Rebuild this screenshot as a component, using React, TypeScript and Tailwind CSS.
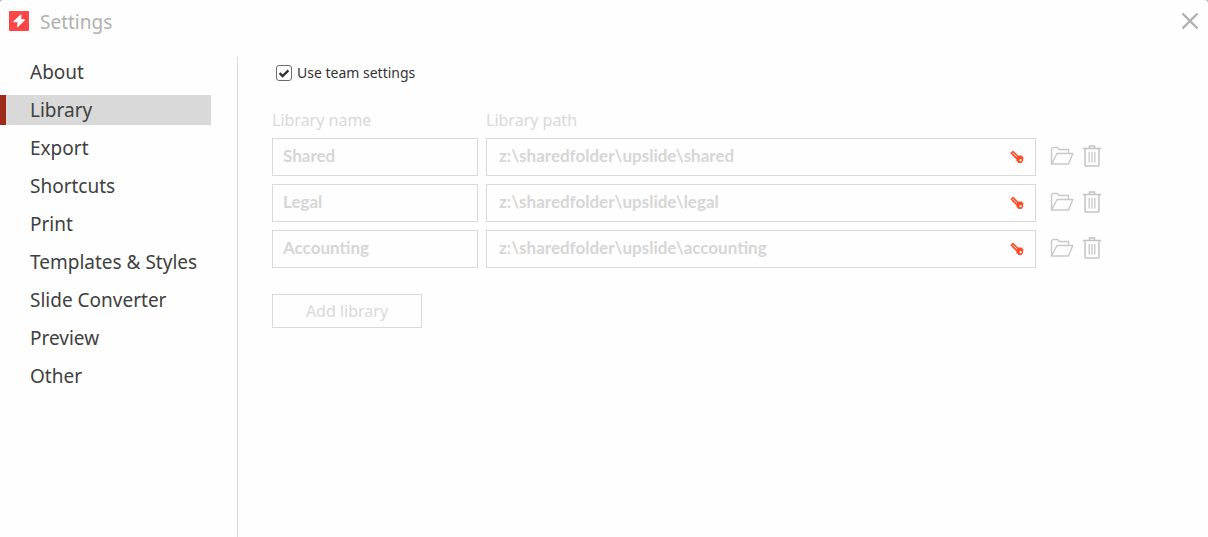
import { useState } from 'react';
import clsx from 'clsx';

const sections = [
  'About',
  'Library',
  'Export',
  'Shortcuts',
  'Print',
  'Templates & Styles',
  'Slide Converter',
  'Preview',
  'Other',
];

const libraries = [
  { name: 'Shared', path: 'z:\\sharedfolder\\upslide\\shared' },
  { name: 'Legal', path: 'z:\\sharedfolder\\upslide\\legal' },
  { name: 'Accounting', path: 'z:\\sharedfolder\\upslide\\accounting' },
];

function LogoIcon() {
  return (
    <svg width="20" height="20" viewBox="0 0 20 20" aria-hidden="true">
      <rect width="20" height="20" rx="1" fill="#ff4646" />
      <path d="M11.6 3.6 4.2 10.4l.3.9h4l-.6 4.6.8.3 7.2-7-.3-.9h-3.4l.3-4.4z" fill="#fff" />
    </svg>
  );
}

function CloseIcon() {
  return (
    <svg width="18" height="18" viewBox="0 0 18 18" aria-hidden="true">
      <path d="M1.5 1.5l15 15M16.5 1.5l-15 15" stroke="#b0b0b0" strokeWidth="2.4" fill="none" />
    </svg>
  );
}

function KeyIcon() {
  return (
    <svg width="14" height="14" viewBox="0 0 14 14" aria-hidden="true">
      <path d="M1.2 3 6.6 8.4M3 1.6l5.2 5.2" stroke="#ff4a25" strokeWidth="1.5" strokeLinecap="round" fill="none" />
      <path d="M1.4 2.8 3 1.6M2.6 4.4l1.2 1.8M4.6 6l1.2 2" stroke="#ff4a25" strokeWidth="1.2" fill="none" />
      <path d="M8.2 5.4h3.4l1.6 1.8v3.6L11.4 13H8.6L6.4 10.8V8z" fill="#ff4a25" />
      <circle cx="10.6" cy="10.2" r="1.1" fill="#fff" />
    </svg>
  );
}

function FolderIcon() {
  return (
    <svg width="24" height="20" viewBox="0 0 24 20" aria-hidden="true">
      <path
        d="M1.5 18V2.5L3 1.5h4.5l1.5 2h9.5v4M1.5 18 7 7.5h15.8L18.5 18z"
        fill="none"
        stroke="#c9c9c9"
        strokeWidth="1.4"
        strokeLinejoin="round"
      />
    </svg>
  );
}

function TrashIcon() {
  return (
    <svg width="18" height="22" viewBox="0 0 18 22" fill="none" stroke="#c4c4c4" aria-hidden="true">
      <path d="M0 3.5h18M6.5 3.5V1h5v2.5" strokeWidth="1.5" />
      <path d="M2 3.5v15.7q0 1.8 1.8 1.8h10.4q1.8 0 1.8-1.8V3.5" strokeWidth="1.5" />
      <path d="M6.2 7v10.5M9 7v10.5M11.8 7v10.5" strokeWidth="1.2" />
    </svg>
  );
}

const fieldClass =
  "h-[38px] w-full border border-[#d9d9d9] bg-transparent pb-1 font-['Lato',sans-serif] text-[17px] font-bold text-[#d6d6d6]";

export default function App() {
  const [active, setActive] = useState('Library');
  const [teamSettings, setTeamSettings] = useState(true);

  return (
    <div className="min-h-screen bg-[#c4c4c4] font-['Noto_Sans','Open_Sans',sans-serif]">
      <div className="flex min-h-screen flex-col rounded-t bg-[#fefefe]">
        <header className="flex h-[57px] items-start justify-between pt-[5px] pr-[9px] pl-[9px]">
          <div className="flex h-8 items-center gap-[11px]">
            <LogoIcon />
            <h1 className="pt-0.5 text-[19px] text-[#b0b0b0]">Settings</h1>
          </div>
          <button type="button" aria-label="Close" className="flex h-8 items-center">
            <CloseIcon />
          </button>
        </header>

        <div className="flex flex-1">
          <nav className="w-[238px] shrink-0 border-r border-[#d9d9d9] pr-[26px]">
            <ul className="flex flex-col gap-2">
              {sections.map((section) => (
                <li key={section}>
                  <button
                    type="button"
                    onClick={() => setActive(section)}
                    className={clsx(
                      'flex h-[30px] w-full items-center border-l-6 pl-6 text-left text-[19px] whitespace-nowrap text-[#404040]',
                      active === section ? 'border-[#9c2b1b] bg-[#d9d9d9]' : 'border-transparent'
                    )}
                  >
                    {section}
                  </button>
                </li>
              ))}
            </ul>
          </nav>

          <main className="flex-1 pr-[107px] pl-[34px]">
            <label className="flex h-8 items-center gap-[5px] pl-1 text-sm text-[#333]">
              <span className="relative flex size-4">
                <input
                  type="checkbox"
                  checked={teamSettings}
                  onChange={(e) => setTeamSettings(e.target.checked)}
                  className="peer size-4 appearance-none rounded-[3px] border border-[#6a6a6a] bg-white"
                />
                <svg
                  viewBox="0 0 16 16"
                  className="pointer-events-none absolute inset-0 hidden peer-checked:block"
                  aria-hidden="true"
                >
                  <path d="M3.6 8.2 6.6 11l5.8-5.6" fill="none" stroke="#333" strokeWidth="2.4" />
                </svg>
              </span>
              Use team settings
            </label>

            <div className="mt-[18px] flex flex-col gap-2">
              <div className="-mb-1 flex gap-2 text-base leading-[27px] text-[#d9d9d9]">
                <span id="library-name" className="w-[206px]">Library name</span>
                <span id="library-path">Library path</span>
              </div>
              {libraries.map((library) => (
                <div key={library.name} className="flex items-center">
                  <div className="w-[206px] shrink-0">
                    <input
                      type="text"
                      disabled
                      aria-labelledby="library-name"
                      defaultValue={library.name}
                      className={clsx(fieldClass, 'px-[10px]')}
                    />
                  </div>
                  <div className="relative ml-2 flex-1">
                    <input
                      type="text"
                      disabled
                      aria-labelledby="library-path"
                      defaultValue={library.path}
                      className={clsx(fieldClass, 'pr-10 pl-3')}
                    />
                    <span className="absolute inset-y-0 right-3 flex items-center">
                      <KeyIcon />
                    </span>
                  </div>
                  <div className="flex items-center gap-[9px] pb-0.5 pl-[14px]">
                    <button type="button" aria-label="Browse">
                      <FolderIcon />
                    </button>
                    <button type="button" aria-label="Delete">
                      <TrashIcon />
                    </button>
                  </div>
                </div>
              ))}
            </div>

            <button
              type="button"
              disabled
              className="mt-[26px] h-[34px] w-[150px] border border-[#d9d9d9] text-base text-[#d9d9d9]"
            >
              Add library
            </button>
          </main>
        </div>
      </div>
    </div>
  );
}
